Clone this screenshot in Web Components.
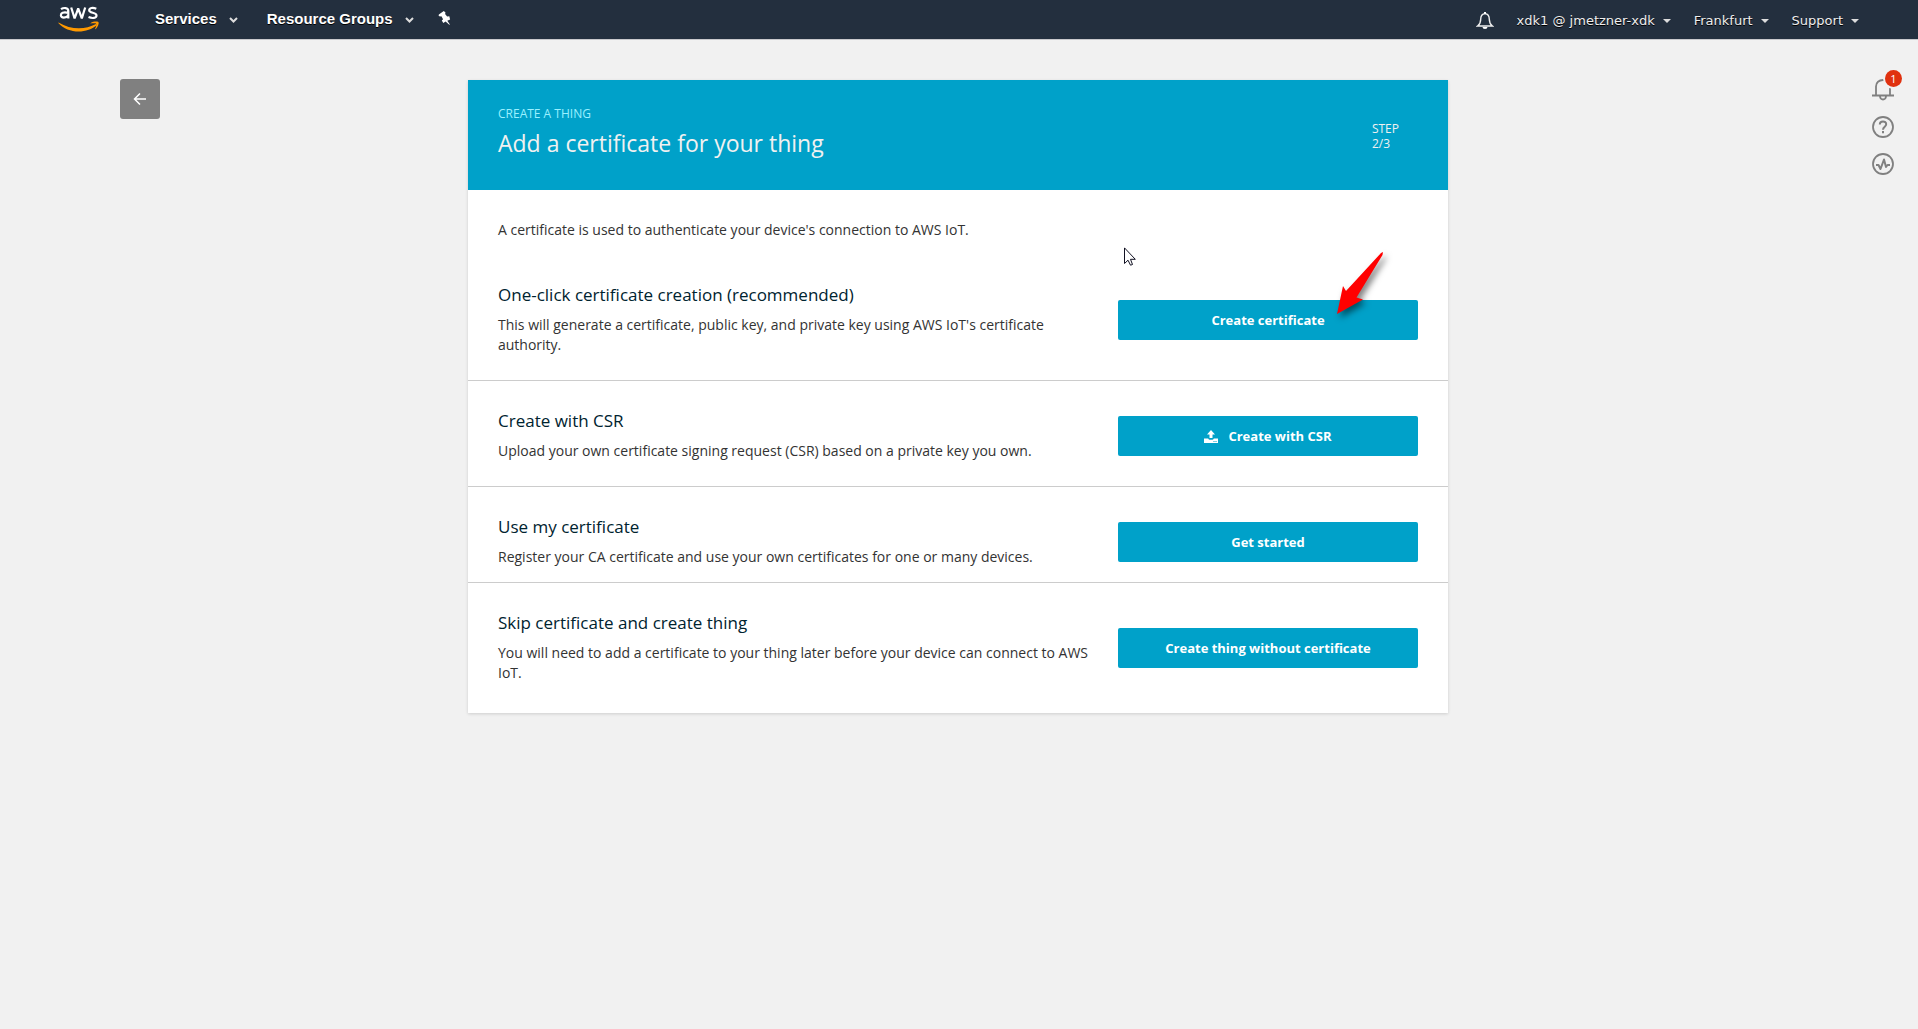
<!DOCTYPE html>
<html lang="en">
<head>
<meta charset="utf-8">
<title>AWS IoT - Add a certificate for your thing</title>
<style>
  html, body { margin: 0; min-height: 100%; background: #f1f1f1; }
  body { font: 14px/20px "Open Sans", "Noto Sans", sans-serif; color: #333; }
</style>
</head>
<body>
<iot-app></iot-app>
<script>
const define = (name, html) => {
  const template = document.createElement('template');
  template.innerHTML = html;
  customElements.define(name, class extends HTMLElement {
    constructor() {
      super();
      this.attachShadow({ mode: 'open' }).append(template.content.cloneNode(true));
    }
  });
};

define('nav-item', `
  <style>
    :host { display: block; }
    button { all: unset; display: flex; align-items: center; gap: 12px; cursor: pointer;
      font: bold 15px/20px "Liberation Sans", Arial, sans-serif; color: #fff; text-shadow: 0 1px 0 #000; }
    svg { display: block; width: 9px; height: 6px; margin-top: 3px; }
    .thin, .solid { display: none; }
    :host([kind="menu"]) .thin { display: block; }
    :host([kind="account"]) .solid { display: block; width: 8px; height: 4px; margin: 0; }
    :host([kind="account"]) button { gap: 8px; font: 13px/20px "DejaVu Sans", Verdana, sans-serif; color: #eee; }
  </style>
  <button type="button"><slot></slot>
    <svg class="thin" viewBox="0 0 9 6"><path d="M1 1l3.500 3.500L8 1" fill="none" stroke="#ddd" stroke-width="2"/></svg>
    <svg class="solid" viewBox="0 0 8 4"><path d="M0 0h8L4 4z" fill="#ddd"/></svg>
  </button>`);

define('top-nav', `
  <style>
    :host { display: flex; align-items: center; height: 39px; background: #232f3e; border-bottom: 1px solid #c8c8cc;
      padding: 0 59px 0 58px; justify-content: space-between; box-sizing: content-box; }
    nav { display: flex; align-items: center; }
    svg { display: block; }
    .left { gap: 24px; padding-bottom: 2px; }
    .left .logo { display: block; margin-right: 31px; }
    .left nav-item + nav-item { margin-left: 5px; }
    .right { gap: 23px; padding-top: 2px; }
    button { all: unset; cursor: pointer; }
  </style>
  <nav class="left" aria-label="Console">
    <a class="logo" href="#" aria-label="AWS home"><svg width="42" height="26" viewBox="0 0 42 26">
      <g fill="none" stroke="#fff" stroke-width="2.200">
        <path d="M3 3.200C5.500 1.500 10.300 1.200 10.300 5V12.400M10.300 6.800C5 5.800 2.900 7 2.900 9.200 2.900 12.500 8.500 12.200 10.300 9.300"/>
        <path d="M13.200 1.500l3.400 10.800 3.600-9.800 3.600 9.800L27.200 1.500" stroke-linejoin="bevel"/>
        <path d="M38.300 2.700C34.800 1.200 31.200 1.800 31.200 4.300 31.200 7.500 38.500 6 38.500 9.400 38.500 12.200 34.300 12.700 30.500 11.100"/>
      </g>
      <path d="M.5 16.500C13 24 27 24 38 18l1 1C29 28 10 28 .3 17z" fill="#f90"/>
      <path d="M32.500 17.200C35 15.500 38.500 15.300 40.500 16c.7 1.500-.6 5-2.800 7.200l-.6-.3c.9-2 1.600-4.300 1.200-5-.6-.7-3.800-.6-5.900-.3z" fill="#f90"/>
    </svg></a>
    <nav-item kind="menu">Services</nav-item>
    <nav-item kind="menu">Resource Groups</nav-item>
    <button type="button" aria-label="Pin shortcuts"><svg width="13" height="15" viewBox="0 0 13 15"><path d="M1.200 3.200L5.800 0l1.700 1.500-.4 1.500 2 2.600 2.200-.3.800 3.200-2.800 1.200 2.600 3.700-.6.400-3.700-3.300-2.300 1.600-1.500-2.600 1.300-1.300-1.700-3-1.600.3L.4 4.200z" fill="#fff"/></svg></button>
  </nav>
  <nav class="right" aria-label="Account">
    <button type="button" aria-label="Notifications"><svg width="18" height="18" viewBox="0 0 18 18"><path d="M9 1.600C5.500 2 4.700 4.500 4.700 7.200 4.700 11 3.500 12.500 1.600 14h14.800C14.500 12.500 13.300 11 13.300 7.200 13.300 4.500 12.500 2 9 1.600z" fill="none" stroke="#eee" stroke-width="1.400"/><path d="M6.500 15h5a2.500 2 0 0 1-5 0zM8 0h2v2H8z" fill="#fff"/></svg></button>
    <nav-item kind="account">xdk1 @ jmetzner-xdk</nav-item>
    <nav-item kind="account">Frankfurt</nav-item>
    <nav-item kind="account">Support</nav-item>
  </nav>`);

define('back-button', `
  <style>
    :host { display: block; }
    button { display: grid; place-items: center; width: 40px; height: 40px; padding: 0; border: 0; border-radius: 3px; background: #808080; cursor: pointer; }
  </style>
  <button type="button" aria-label="Back"><svg width="14" height="14" viewBox="0 0 14 14"><path d="M13 7H1.500M7 1.500L1.500 7 7 12.500" fill="none" stroke="#fff" stroke-width="1.500"/></svg></button>`);

define('tool-rail', `
  <style>
    :host { display: flex; flex-direction: column; gap: 15px; }
    button { all: unset; position: relative; display: block; width: 22px; height: 22px; cursor: pointer; }
    svg { display: block; fill: none; stroke: #808080; stroke-width: 1.800; overflow: visible; }
    .badge { position: absolute; right: -8px; top: -9px; width: 17px; height: 17px; border-radius: 50%;
      background: #e0310f; color: #fff; font: 11px/17px "Open Sans", sans-serif; text-align: center; box-shadow: 0 0 0 2px #f1f1f1; }
  </style>
  <button type="button" aria-label="1 notification"><svg width="22" height="22" viewBox="0 0 22 22"><path d="M0 16.500h22M4 16V7.500C4 3.500 7 1 11 1s7 2.500 7 6.500V16M8 17.500c.5 4 5.500 4 6 0"/></svg><span class="badge">1</span></button>
  <button type="button" aria-label="Help"><svg width="22" height="22" viewBox="0 0 22 22"><circle cx="11" cy="11" r="10"/><path d="M7.800 8.600C7.800 4.300 14.200 4.500 14.200 8.300 14.200 10.800 11 10.700 11 13.800M11 15v2.200" stroke-width="2"/></svg></button>
  <button type="button" aria-label="Activity"><svg width="22" height="22" viewBox="0 0 22 22"><circle cx="11" cy="11" r="10"/><path d="M4 12h2.500L8.500 16l3.500-9.500L14 14l1.500-2H18" stroke-width="2" stroke-linejoin="round"/></svg></button>`);

define('wizard-header', `
  <style>
    :host { display: flex; align-items: center; justify-content: space-between; min-height: 110px; box-sizing: border-box;
      padding: 2px 49px 0 30px; background: #00a1c9; color: #f1f1f1; }
    .kicker { font-size: 12px; line-height: 20px; color: #9bf0ff; margin: 0; text-transform: uppercase; }
    h1 { margin: 0; padding-bottom: 6px; font-size: 23px; line-height: 38px; font-weight: 400; }
    .step { font-size: 12px; line-height: 15px; text-transform: uppercase; }
    .step span { display: block; }
  </style>
  <div><p class="kicker"><slot name="kicker"></slot></p><h1><slot></slot></h1></div>
  <div class="step"><span>Step</span><slot name="step"></slot></div>`);

define('certificate-option', `
  <style>
    :host { display: flex; align-items: center; gap: 18px; padding: 25px 30px 20px; border-bottom: 1px solid #ccc; }
    :host([compact]) { padding-bottom: 10px; }
    :host([last]) { padding-bottom: 25px; border: 0; }
    .text { flex: 1; padding-bottom: 5px; }
    h2 { margin: 0 0 5px; font-size: 17px; line-height: 30px; font-weight: 400; color: #00232f; }
    p { margin: 0; }
  </style>
  <div class="text"><h2><slot name="title"></slot></h2><p><slot></slot></p></div>
  <slot name="action"></slot>`);

define('action-button', `
  <style>
    :host { display: block; flex: 0 0 300px; }
    button { display: flex; width: 100%; height: 40px; align-items: center; justify-content: center; gap: 10px; padding: 0;
      border: 0; border-radius: 2px; background: #00a1c9; color: #fff; font: bold 13px/20px "Open Sans", sans-serif; cursor: pointer; }
  </style>
  <button type="button"><slot name="icon"></slot><slot></slot></button>`);

define('red-pointer', `
  <style>:host { position: absolute; left: 868px; top: 171px; pointer-events: none; } svg { display: block; overflow: visible; filter: drop-shadow(3px 4px 3px rgba(0,0,0,.5)); }</style>
  <svg width="48" height="64" viewBox="0 0 48 64"><path d="M47 1L46.500 4 20.500 46.500 27 48.500 1 63 7 35l3 5L45 2z" fill="#f00"/></svg>`);

define('mouse-cursor', `
  <style>:host { position: absolute; left: 656px; top: 167px; pointer-events: none; } svg { display: block; }</style>
  <svg width="12" height="20" viewBox="0 0 12 20"><path d="M.5 .9V16.500L4 13.200 6.500 18.200 8.500 17.500 6.500 12.300H11.300z" fill="#fff" stroke="#112"/></svg>`);

define('wizard-card', `
  <style>
    :host { display: block; position: relative; background: #fff; box-shadow: 0 1px 3px rgba(0,0,0,.15); }
    .intro { margin: 0; padding: 30px 30px 15px; }
  </style>
  <wizard-header><span slot="kicker">Create a thing</span>Add a certificate for your thing<span slot="step">2/3</span></wizard-header>
  <p class="intro">A certificate is used to authenticate your device's connection to AWS IoT.</p>
  <certificate-option><span slot="title">One-click certificate creation (recommended)</span>This will generate a certificate, public key, and private key using AWS IoT's certificate authority.<action-button slot="action">Create certificate</action-button></certificate-option>
  <certificate-option><span slot="title">Create with CSR</span>Upload your own certificate signing request (CSR) based on a private key you own.<action-button slot="action"><svg slot="icon" width="14" height="13" viewBox="0 0 14 13"><path d="M7 0l4 4.500H8.500V8h-3V4.500H3zM0 8.500h4.200q.5 1.300 1.500 1.300h2.600q1 0 1.500-1.300H14V13H0z" fill="#fff"/><path d="M9.500 11h1v1h-1zM11.500 11h1v1h-1z" fill="#00a1c9"/></svg>Create with CSR</action-button></certificate-option>
  <certificate-option compact><span slot="title">Use my certificate</span>Register your CA certificate and use your own certificates for one or many devices.<action-button slot="action">Get started</action-button></certificate-option>
  <certificate-option last><span slot="title">Skip certificate and create thing</span>You will need to add a certificate to your thing later before your device can connect to AWS IoT.<action-button slot="action">Create thing without certificate</action-button></certificate-option>
  <mouse-cursor></mouse-cursor>
  <red-pointer></red-pointer>`);

define('iot-app', `
  <style>
    :host { display: block; }
    main { display: grid; grid-template-columns: 1fr minmax(0, 980px) 1fr; align-items: start; padding: 39px 24px 40px 22px; }
    back-button { margin-left: 98px; }
    wizard-card { margin-top: 1px; }
    tool-rail { justify-self: end; }
  </style>
  <top-nav></top-nav>
  <main><back-button></back-button><wizard-card></wizard-card><tool-rail></tool-rail></main>`);
</script>
</body>
</html>
